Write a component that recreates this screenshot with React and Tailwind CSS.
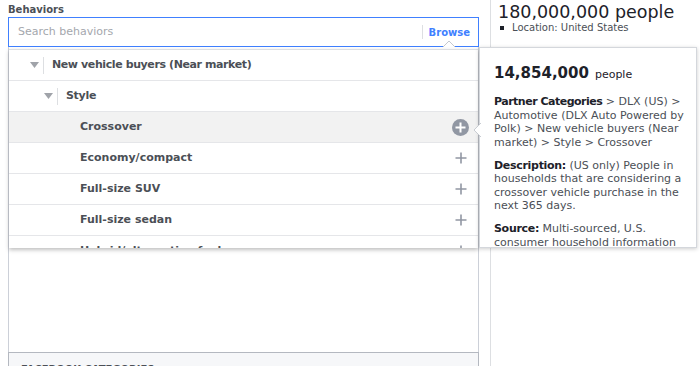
import React from "react";

const rows = [
  { label: "Crossover", hover: true },
  { label: "Economy/compact" },
  { label: "Full-size SUV" },
  { label: "Full-size sedan" },
  { label: "Hybrid/alternative fuel" },
];

const Caret = () => (
  <svg width="9" height="6" viewBox="0 0 9 6">
    <path d="M0 0 L9 0 L4.5 6 Z" fill="#a0a3a9" />
  </svg>
);

const Plus = () => (
  <svg width="12" height="12" viewBox="0 0 12 12">
    <path d="M6 0.5 V11.5 M0.5 6 H11.5" stroke="#9197a3" strokeWidth="1.6" />
  </svg>
);

const CirclePlus = () => (
  <svg width="17" height="17" viewBox="0 0 17 17">
    <circle cx="8.5" cy="8.5" r="8.5" fill="#9197a3" />
    <path d="M8.5 3.5 V13.5 M3.5 8.5 H13.5" stroke="#fff" strokeWidth="2" />
  </svg>
);

const App = () => {
  return (
    <div className="relative w-[700px] h-[366px] overflow-hidden bg-white flex font-['DejaVu_Sans',sans-serif] text-[#4b4f56]">
      {/* left column */}
      <div className="w-[491px] shrink-0 border-r border-[#dddfe2] pl-2 pr-[11px] flex flex-col">
        <div className="pt-[3px] h-[17px] text-[10px] font-bold leading-[14px]">Behaviors</div>
        <div className="relative h-[30px] border border-[#4080ff] flex items-center pl-[9px] pr-[8px]">
          <span className="text-[11px] text-[#a4a7ad] flex-1">Search behaviors</span>
          <span className="h-[14px] border-l border-[#dddfe2] mr-[6px]" />
          <span className="text-[10px] font-bold text-[#4080ff]">Browse</span>
          <svg className="absolute left-[434px] bottom-[-1px]" width="12" height="6" viewBox="0 0 12 6">
            <path d="M0 6 L6 0 L12 6" fill="#fff" stroke="#c4c8cf" strokeWidth="1" />
          </svg>
        </div>
        <div className="flex-1 border-x border-[#ccd0d8]" />
        <div className="h-[14px] border border-b-0 border-[#b4b8c0] bg-[#f6f7f9] pl-[12px] pt-[11px] text-[10px] font-bold leading-[12px] text-[#4b4f56]">
          FACEBOOK CATEGORIES
        </div>
      </div>

      {/* right column */}
      <div className="pl-[7px] pt-[2px]">
        <div className="text-[17.5px] leading-[20px] text-[#1d2129]">180,000,000 people</div>
        <div className="flex items-center text-[10px] leading-[14px] text-[#4b4f56] mt-[-1px]">
          <span className="w-[4px] h-[4px] bg-[#1d2129] ml-[2px] mr-[8px]" />
          Location: United States
        </div>
      </div>

      {/* dropdown */}
      <div className="absolute left-[9px] top-[49px] w-[469px] h-[199px] overflow-hidden bg-white border-t border-[#dddfe2] shadow-[0_2px_4px_rgba(0,0,0,0.25)]">
        <div className="h-[31px] border-b border-[#e5e6e9] flex items-center">
          <span className="ml-[21px] w-[9px] flex"><Caret /></span>
          <span className="ml-[4px] h-[17px] border-l border-[#dddfe2]" />
          <span className="ml-[8px] text-[11px] font-bold tracking-[-0.4px]">New vehicle buyers (Near market)</span>
        </div>
        <div className="h-[31px] border-b border-[#e5e6e9] flex items-center">
          <span className="ml-[35px] w-[9px] flex"><Caret /></span>
          <span className="ml-[4px] h-[17px] border-l border-[#dddfe2]" />
          <span className="ml-[8px] text-[11px] font-bold tracking-[-0.3px]">Style</span>
        </div>
        {rows.map((r) => (
          <div
            key={r.label}
            className={`h-[31px] border-b border-[#e5e6e9] flex items-center pl-[71px] pr-[9px] ${r.hover ? "bg-[#f2f2f2]" : ""}`}
          >
            <span className="flex-1 text-[11px] font-bold">{r.label}</span>
            {r.hover ? <CirclePlus /> : <span className="mr-[2px] flex"><Plus /></span>}
          </div>
        ))}
      </div>

      {/* tooltip */}
      <div className="absolute left-[479px] top-[47px] w-[218px] h-[201px] bg-white border border-[#d4d7dc] shadow-[0_1px_4px_rgba(0,0,0,0.2)]">
        <svg className="absolute left-[-7px] top-[75px]" width="8" height="14" viewBox="0 0 8 14">
          <path d="M8 0 L1 7 L8 14" fill="#fff" stroke="#c8ccd2" strokeWidth="1" />
        </svg>
        <div className="h-full overflow-hidden pl-[14px] pr-[4px] pt-[13px] text-[11px] leading-[13.5px] text-[#4b4f56] whitespace-nowrap">
          <div className="text-[#1d2129] mb-[10px]">
            <span className="text-[15px] font-bold leading-[24px]">14,854,000</span>
            <span className="text-[11px] ml-[6px]">people</span>
          </div>
          <p className="mb-[9.5px]">
            <b className="text-[#1d2129] tracking-[-0.5px]">Partner Categories</b> &gt; DLX (US) &gt;
            <br />
            Automotive (DLX Auto Powered by
            <br />
            Polk) &gt; New vehicle buyers (Near
            <br />
            market) &gt; Style &gt; Crossover
          </p>
          <p className="mb-[9.5px]">
            <b className="text-[#1d2129] tracking-[-0.3px]">Description:</b> (US only) People in
            <br />
            households that are considering a
            <br />
            crossover vehicle purchase in the
            <br />
            next 365 days.
          </p>
          <p>
            <b className="text-[#1d2129] tracking-[-0.3px]">Source:</b> Multi-sourced, U.S.
            <br />
            consumer household information
          </p>
        </div>
      </div>
    </div>
  );
};

export default App;
